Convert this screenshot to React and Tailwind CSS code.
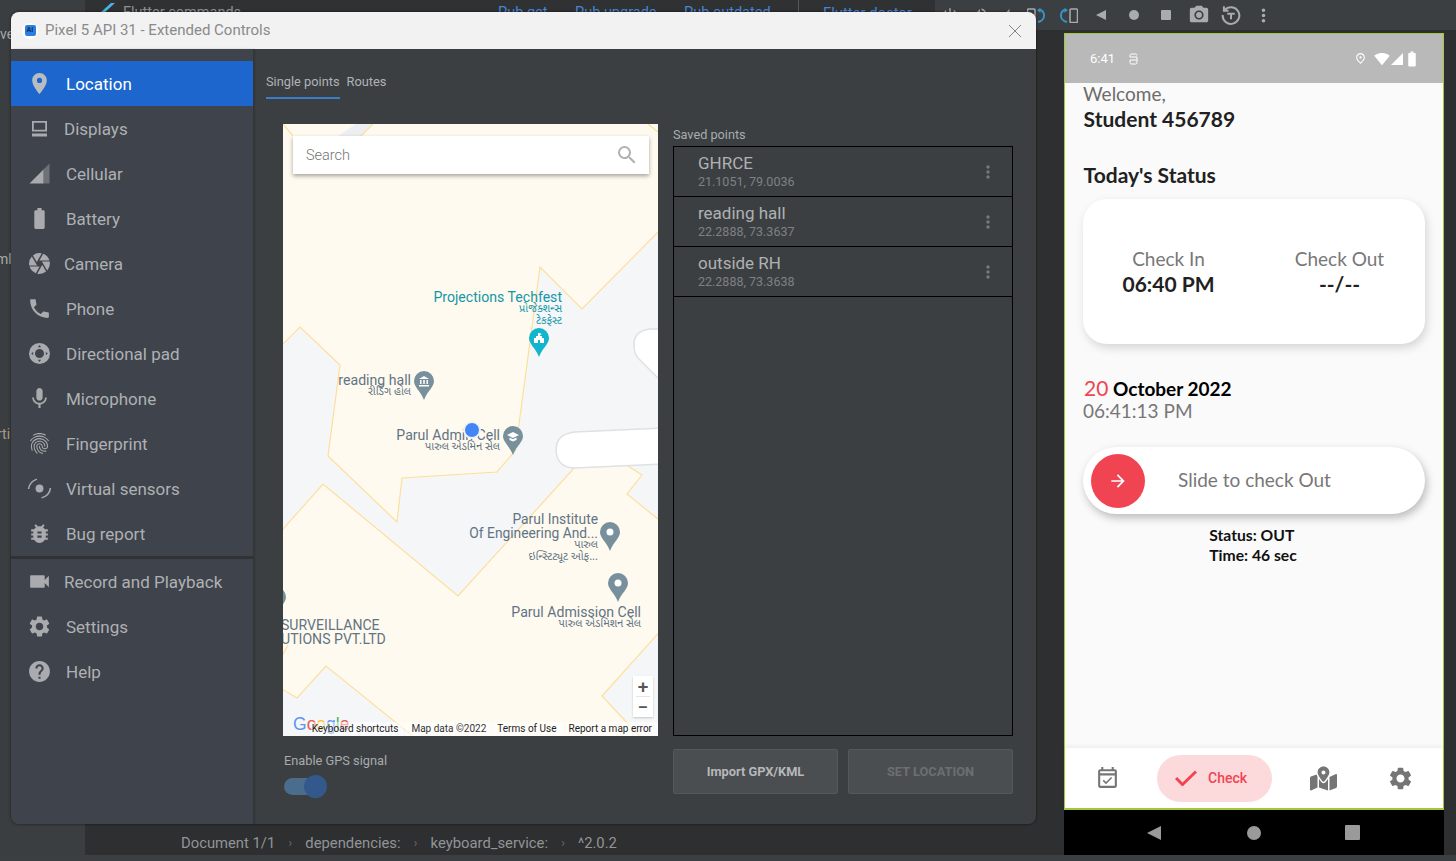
import {
  MdLocationOn,
  MdBatteryFull,
  MdCamera,
  MdPhone,
  MdMic,
  MdFingerprint,
  MdBugReport,
  MdVideocam,
  MdSettings,
  MdHelp,
  MdSearch,
  MdMoreVert,
  MdArrowForward,
  MdOutlineEventAvailable,
  MdPhotoCamera,
  MdPowerSettingsNew,
  MdVolumeUp,
  MdVolumeDown,
  MdOutlinePlace,
  MdSignalWifi4Bar,
} from "react-icons/md";
import { FaMapMarkedAlt } from "react-icons/fa";

const NAV_TOP = [
  { label: "Location", icon: MdLocationOn, active: true },
  { label: "Displays", icon: DisplayIcon, tight: true },
  { label: "Cellular", icon: CellularIcon },
  { label: "Battery", icon: MdBatteryFull },
  { label: "Camera", icon: MdCamera, tight: true },
  { label: "Phone", icon: MdPhone },
  { label: "Directional pad", icon: DpadIcon },
  { label: "Microphone", icon: MdMic },
  { label: "Fingerprint", icon: MdFingerprint },
  { label: "Virtual sensors", icon: SensorsIcon },
  { label: "Bug report", icon: MdBugReport },
];

const NAV_BOTTOM = [
  { label: "Record and Playback", icon: MdVideocam, tight: true },
  { label: "Settings", icon: MdSettings },
  { label: "Help", icon: MdHelp },
];

const SAVED_POINTS = [
  { name: "GHRCE", coords: "21.1051, 79.0036" },
  { name: "reading hall", coords: "22.2888, 73.3637" },
  { name: "outside RH", coords: "22.2888, 73.3638" },
];

function DisplayIcon({ className }) {
  return (
    <svg viewBox="0 0 25 25" className={className}>
      <path
        fill="currentColor"
        fillRule="evenodd"
        d="M5 5h15v10.500H5zM6.800 6.800v7h11.400v-7zM5 17.500h15V20.500H5z"
      />
    </svg>
  );
}

function CellularIcon({ className }) {
  return (
    <svg viewBox="-1.500 -1.500 25 25" className={className}>
      <path d="M1 21 15 7v14z" fill="currentColor" />
      <path d="M15 7l6-6v20h-6z" fill="currentColor" opacity="0.45" />
    </svg>
  );
}

function DpadIcon({ className }) {
  return (
    <svg viewBox="-1.500 -1.500 25 25" className={className}>
      <path
        fillRule="evenodd"
        fill="currentColor"
        d="M11 .5a10.500 10.500 0 1 0 0 21 10.500 10.500 0 0 0 0-21zm0 6a4.500 4.500 0 1 1 0 9 4.500 4.500 0 0 1 0-9zM11 2.600 9.400 4.700h3.200zM11 19.400l1.600-2.100H9.400zM2.600 11l2.100 1.600V9.400zM19.400 11l-2.100-1.600v3.200z"
      />
    </svg>
  );
}

function SensorsIcon({ className }) {
  return (
    <svg viewBox="0 0 24 24" className={className} fill="none" stroke="currentColor">
      <circle cx="12" cy="12" r="3.800" fill="currentColor" stroke="none" />
      <path d="M1.500 12.500C2 8 5 4.500 9.500 3" strokeWidth="1.500" />
      <path d="M22.500 11.500C22 16 19 19.500 14 21" strokeWidth="1.500" />
    </svg>
  );
}

function RotateIcon({ flip, className }) {
  return (
    <svg viewBox="0 0 18 15" className={`${className} ${flip ? "-scale-x-100" : ""}`}>
      <rect x="10" y="1" width="7.500" height="13.500" rx="1" fill="none" stroke="#a9abad" strokeWidth="1.500" />
      <path d="M7 14C2.500 13 .8 9.500 1 7c.2-2.500 2-5 5-5.500" fill="none" stroke="#3592c4" strokeWidth="2" />
      <path d="M4.500 0v5L8 2z" fill="#3592c4" />
    </svg>
  );
}

function ReplayIcon({ className }) {
  return (
    <svg viewBox="0 0 24 24" className={className} fill="none" stroke="currentColor" strokeWidth="2.400">
      <path d="M4.500 6A10 10 0 1 1 2 12" />
      <path d="M3.500 1.500V7H9" />
      <path d="M7.500 10.500h9M12 10.500V17" />
    </svg>
  );
}

function Triangle({ className }) {
  return (
    <svg viewBox="0 0 10 10" className={className}>
      <path d="M0 5 10 0v10z" fill="currentColor" />
    </svg>
  );
}

function MapPin({ color, className, children }) {
  return (
    <svg viewBox="0 0 20 29" className={className}>
      <path
        d="M10 0a10 10 0 0 1 10 10c0 6-6.500 10-10 19C6.500 20 0 16 0 10A10 10 0 0 1 10 0z"
        fill={color}
      />
      {children || <circle cx="10" cy="10" r="3.500" fill="#fff" />}
    </svg>
  );
}

function NavRow({ item }) {
  const Icon = item.icon;
  return (
    <div
      className={`flex h-[45px] items-center pl-[15.500px] ${
        item.active ? "bg-[#1c66cd] text-white" : "text-[#aeb1b4]"
      }`}
    >
      <Icon className={`h-[25px] w-[25px] shrink-0 ${item.active ? "text-[#b9bdc2]" : "text-[#a9abae]"}`} />
      <span className={`pt-[2px] text-[17px] leading-none ${item.tight ? "ml-[12.500px]" : "ml-[14.500px]"}`}>{item.label}</span>
    </div>
  );
}

function Sidebar() {
  return (
    <aside className="flex w-[242px] shrink-0 flex-col bg-[#3f434b] pt-[12px] shadow-[2px_0_2px_rgba(0,0,0,0.15)]">
      {NAV_TOP.map((item) => (
        <NavRow key={item.label} item={item} />
      ))}
      <div className="h-[3px] bg-[#303236]" />
      {NAV_BOTTOM.map((item) => (
        <NavRow key={item.label} item={item} />
      ))}
    </aside>
  );
}

function MapLabel({ className, main, sub, color = "text-[#5f7484]", size = "text-[14.100px]" }) {
  return (
    <div className={`absolute whitespace-nowrap text-right leading-[14px] ${color} ${className}`}>
      {main.map((line) => (
        <div key={line} className={size}>{line}</div>
      ))}
      {sub &&
        sub.map((line) => (
          <div key={line} className="text-[11px] leading-[11.500px] [font-family:'Noto_Sans_Gujarati','Noto_Sans',sans-serif]">{line}</div>
        ))}
    </div>
  );
}

function MapView() {
  return (
    <div className="relative h-[612px] w-[375px] overflow-hidden bg-[#fffaef]">
      <svg viewBox="283 124 375 612" className="absolute inset-0 h-full w-full">
        <g stroke="#fddf9c" strokeWidth="1.200">
          <path
            fill="#f5f6f8"
            d="M664 226 582 309 540 267 519 424 515 451 497 472 402 478 397 522 328 456 340 365 300 327 277 350V536L323 484 458 596 595 445 642 475 627 494 664 524z"
          />
          <path fill="#f5f6f8" d="M664 627 602 696 645 742H664z" />
          <path fill="#f5f6f8" d="M277 686 297 698 326 666 420 742H277z" />
          <path fill="#eceef1" d="M356 124 338 136 361 136 373 124z" stroke="none" />
          <path fill="none" d="M283 124 293 136M373 124 361 136M648 124 658 132M288 645 282 656" />
        </g>
        <path d="M662 329H650Q633 331 634 346 634 355 640 360L662 382z" fill="#fff" stroke="#dfe1e5" strokeWidth="1.500" />
        <path d="M662 428 575 432Q556 434 556 450 557 468 575 468L662 464z" fill="#fff" stroke="#dfe1e5" strokeWidth="1.500" />
      </svg>

      <div className="absolute left-[10px] top-[12px] flex h-[38px] w-[356px] items-center justify-between bg-white pl-[13px] pr-[10px] shadow-[0_2px_4px_rgba(0,0,0,0.35)]">
        <span className="pt-[2px] text-[14.500px] font-light text-[#757575]">Search</span>
        <MdSearch className="h-[24px] w-[24px] text-[#b0b0b0]" />
      </div>

      <MapLabel
        className="right-[96px] top-[166px]"
        main={["Projections Techfest"]}
        sub={["પ્રોજેક્શન્સ", "ટેકફેસ્ટ"]}
        color="text-[#1596a8]"
      />
      <MapPin color="#12b5cb" className="absolute left-[246px] top-[204px] h-[29px] w-[20px]">
        <path d="M5 15v-5h2V8h2V5h1l3 1-2 1v1h2v2h2v5h-4v-3H9v3z" fill="#fff" />
      </MapPin>

      <MapLabel className="right-[247px] top-[249px]" main={["reading hall"]} sub={["રીડિંગ હોલ"]} />
      <MapPin color="#78909c" className="absolute left-[131px] top-[247px] h-[29px] w-[20px]">
        <path d="M10 5l5 3H5zM6 9h1.500v4H6zM9.250 9h1.500v4h-1.500zM12.500 9H14v4h-1.500zM5 14h10v1.500H5z" fill="#fff" />
      </MapPin>

      <MapLabel className="right-[158px] top-[304px]" main={["Parul Admin Cell"]} sub={["પારુલ એડમિન સેલ"]} />
      <MapPin color="#78909c" className="absolute left-[220px] top-[302px] h-[29px] w-[20px]">
        <path d="M10 6l6 3-6 3-6-3zM6.500 11.500 10 13.300l3.500-1.800V14L10 15.500 6.500 14z" fill="#fff" />
      </MapPin>
      <div className="absolute left-[180px] top-[297px] h-[18px] w-[18px] rounded-full border-2 border-[#f1f1f1] bg-[#4285f4]" />

      <MapLabel
        className="right-[60px] top-[388px]"
        main={["Parul Institute", "Of Engineering And..."]}
        sub={["પારુલ", "ઇન્સ્ટિટ્યૂટ ઓફ..."]}
        size="text-[13.800px]"
      />
      <MapPin color="#78909c" className="absolute left-[317px] top-[398px] h-[29px] w-[20px]" />

      <MapPin color="#78909c" className="absolute left-[325px] top-[449px] h-[29px] w-[20px]" />
      <MapLabel className="right-[17px] top-[481px]" main={["Parul Admission Cell"]} sub={["પારુલ એડમિશન સેલ"]} />

      <MapPin color="#78909c" className="absolute left-[-17px] top-[463px] h-[29px] w-[20px]" />
      <div className="absolute -left-[2px] top-[494px] whitespace-nowrap text-[14.100px] leading-[14px] text-[#5f7484]">
        <div>SURVEILLANCE</div>
        <div>UTIONS PVT.LTD</div>
      </div>

      <div className="absolute left-[350px] top-[552px] flex h-[41px] w-[20px] flex-col items-center bg-white text-[#555] shadow-[0_1px_2px_rgba(0,0,0,0.2)]">
        <span className="flex h-[20px] items-center text-[19px] font-medium leading-none">+</span>
        <span className="h-px w-[14px] bg-[#e5e5e5]" />
        <span className="flex h-[20px] items-center text-[19px] font-medium leading-none">−</span>
      </div>

      <div className="absolute bottom-[3px] left-[10px] text-[17.500px] font-medium leading-none opacity-85 [font-family:'Liberation_Sans',sans-serif]">
        <span className="text-[#4285f4]">G</span>
        <span className="text-[#ea4335]">o</span>
        <span className="text-[#fbbc05]">o</span>
        <span className="text-[#4285f4]">g</span>
        <span className="text-[#34a853]">l</span>
        <span className="text-[#ea4335]">e</span>
      </div>
      <div className="absolute bottom-0 right-0 flex h-[14px] items-center gap-[1px] text-[10px] leading-none text-[#222]">
        <span className="flex h-full items-center bg-white/50 pl-[1px] pr-[6px]">Keyboard shortcuts</span>
        <span className="flex h-full items-center bg-white/60 pl-[6px] pr-[5px] text-[#333]">Map data ©2022</span>
        <span className="flex h-full items-center bg-white/60 pl-[5px] pr-[6px]">Terms of Use</span>
        <span className="flex h-full items-center bg-white/60 pl-[5px] pr-[6px]">Report a map error</span>
      </div>
    </div>
  );
}

function SavedRow({ point }) {
  return (
    <div className="flex h-[50px] items-center justify-between border-b border-black pl-[24px] pr-[14px]">
      <div>
        <div className="text-[17px] leading-[19px] text-[#afb1b3]">{point.name}</div>
        <div className="pt-[1px] text-[12.500px] leading-[15px] text-[#7e8184]">{point.coords}</div>
      </div>
      <MdMoreVert className="h-[20px] w-[20px] text-[#77797c]" />
    </div>
  );
}

function ExtendedControls() {
  return (
    <section className="absolute left-[11px] top-[12px] flex h-[812px] w-[1025px] flex-col overflow-hidden rounded-[8px] shadow-[0_0_3px_rgba(0,0,0,0.6)]">
      <header className="flex h-[37px] shrink-0 items-center bg-[#f2f2f2] pl-[11px] pr-[15px]">
        <span className="flex h-[16px] w-[16px] items-center justify-center rounded-full bg-white">
          <span className="flex h-[11px] w-[11px] items-center justify-center rounded-[2px] bg-[#2d7fe0] text-[7px] font-bold leading-none text-[#0c2d5e]">
            AI
          </span>
        </span>
        <span className="ml-[7px] text-[15px] text-[#8a8a8a]">Pixel 5 API 31 - Extended Controls</span>
        <svg viewBox="0 0 12 12" className="ml-auto h-[12px] w-[12px]" fill="none" stroke="#858585" strokeWidth="1">
          <path d="M0 0 12 12M12 0 0 12" />
        </svg>
      </header>
      <div className="flex min-h-0 flex-1 bg-[#3b3f42]">
        <Sidebar />
        <main className="flex-1 pl-[13px]">
          <nav className="flex h-[50px] items-end gap-[7px] text-[12.800px] text-[#b0b3b6]">
            <span className="flex h-[37px] items-center border-b-2 border-[#3b7dc9] pt-[4px]">Single points</span>
            <span className="flex h-[37px] items-center pb-[2px] pt-[4px]">Routes</span>
          </nav>
          <div className="mt-[25px] flex pl-[17px]">
            <div className="w-[375px]">
              <MapView />
              <div className="mt-[17px] pl-[1px] text-[12.800px] leading-[15px] text-[#a8abad]">Enable GPS signal</div>
              <div className="relative mt-[10px] ml-[1px] h-[17px] w-[32px] rounded-full bg-[#4a6d8e]">
                <span className="absolute -right-[11px] -top-[3px] h-[23px] w-[23px] rounded-full bg-[#33598c]" />
              </div>
            </div>
            <div className="ml-[15px] flex w-[340px] flex-col">
              <div className="h-[22px] pt-[3px] text-[12.700px] leading-[15px] text-[#a9acae]">Saved points</div>
              <div className="h-[590px] border border-black">
                {SAVED_POINTS.map((point) => (
                  <SavedRow key={point.name} point={point} />
                ))}
              </div>
              <div className="mt-[13px] flex gap-[10px] text-[12.800px] font-bold">
                <button className="h-[45px] flex-1 rounded-[2px] border border-[#54585b] bg-[#4a4e51] pt-[1px] text-[#b6b8ba]">
                  Import GPX/KML
                </button>
                <button className="h-[45px] flex-1 rounded-[2px] border border-[#54585b] bg-[#4a4e51] pt-[1px] text-[#6c6f72]">
                  SET LOCATION
                </button>
              </div>
            </div>
          </div>
        </main>
      </div>
    </section>
  );
}

function IdeBackdrop() {
  return (
    <>
      <div className="absolute inset-y-0 left-0 w-[85px] overflow-hidden bg-[#3b3e40] text-[14px] text-[#a9a9a9]">
        <span className="absolute left-0 top-[24px]">ve</span>
        <span className="absolute -left-[4px] top-[249px]">ml</span>
        <span className="absolute -left-[3px] top-[424px] text-[#a89a88]">rti</span>
      </div>
      <div className="absolute left-[85px] right-[521px] top-0 h-[30px] bg-[#2f3133] text-[14.500px] text-[#4a86d8]">
        <svg viewBox="0 0 15 10" className="absolute left-[15px] top-[3px] h-[10px] w-[15px]">
          <path d="M0 10 11 0h4L4 10z" fill="#48b5e8" />
        </svg>
        <span className="absolute left-[38px] top-[2px] text-[#8f9193]">Flutter commands</span>
        <span className="absolute left-[413px] top-[2px]">Pub get</span>
        <span className="absolute left-[490px] top-[2px]">Pub upgrade</span>
        <span className="absolute left-[599px] top-[2px]">Pub outdated</span>
        <span className="absolute left-[713px] top-0 h-[12px] w-px bg-[#55585a]" />
        <span className="absolute left-[738px] top-[2px] text-[14.800px]">Flutter doctor</span>
      </div>
      <div className="absolute right-0 top-0 flex h-[30px] w-[521px] items-center bg-[#3c3f41] text-[#a9abad]">
        <MdPowerSettingsNew className="ml-[6px] h-[18px] w-[18px]" />
        <MdVolumeUp className="ml-[12px] h-[18px] w-[18px]" />
        <MdVolumeDown className="ml-[10px] h-[18px] w-[18px]" />
        <RotateIcon flip className="ml-[10px] h-[15px] w-[18px]" />
        <RotateIcon className="ml-[15px] h-[15px] w-[18px]" />
        <Triangle className="ml-[18px] h-[10px] w-[10px]" />
        <span className="ml-[23px] h-[10px] w-[10px] rounded-full bg-[#a9abad]" />
        <span className="ml-[22px] h-[10px] w-[10px] rounded-[1px] bg-[#a9abad]" />
        <MdPhotoCamera className="ml-[17px] h-[22px] w-[22px]" />
        <ReplayIcon className="ml-[11px] h-[20px] w-[20px]" />
        <MdMoreVert className="ml-[12px] h-[21px] w-[21px]" />
      </div>
      <div className="absolute bottom-[6px] left-[85px] right-0 h-[29px] bg-[#2d2f31]" />
      <div className="absolute bottom-0 left-0 right-0 h-[6px] bg-[#3c3f41]" />
      <div className="absolute bottom-[6px] left-[181px] flex h-[24px] items-center text-[14.800px] text-[#929496]">
        <span>Document 1/1</span>
        <span className="w-[30px] text-center text-[12px] text-[#6b6d6f]">›</span>
        <span>dependencies:</span>
        <span className="w-[30px] text-center text-[12px] text-[#6b6d6f]">›</span>
        <span>keyboard_service:</span>
        <span className="w-[30px] text-center text-[12px] text-[#6b6d6f]">›</span>
        <span>^2.0.2</span>
      </div>
    </>
  );
}

function Phone() {
  return (
    <section className="absolute left-[1064px] top-[33px] flex h-[822px] w-[380px] flex-col bg-black">
      <div className="flex h-[777px] flex-col border-x border-t border-b-2 border-[#a3c93a] bg-[#fafafa]">
        <div className="flex h-[49px] shrink-0 items-center bg-[#b9b9b9] pl-[25px] pr-[22px] text-white">
          <span className="pt-[1px] text-[13px] [font-family:Roboto,sans-serif]">6:41</span>
          <svg viewBox="0 0 9 12" className="ml-[14px] h-[12px] w-[9px]" fill="none" stroke="currentColor" strokeWidth="1">
            <path d="M1 4V2.500A1.500 1.500 0 0 1 2.500 1h4A1.500 1.500 0 0 1 8 2.500M1 4h7v5.500A1.500 1.500 0 0 1 6.500 11h-4A1.500 1.500 0 0 1 1 9.500V7h7" />
          </svg>
          <MdOutlinePlace className="ml-auto h-[13px] w-[13px]" />
          <MdSignalWifi4Bar className="ml-[7px] h-[16px] w-[16px]" />
          <svg viewBox="0 0 12 12" className="ml-[1px] h-[12px] w-[12px]">
            <path d="M0 12 12 0v12z" fill="currentColor" />
          </svg>
          <MdBatteryFull className="h-[18px] w-[18px]" />
        </div>

        <div className="flex-1 px-[18px] [font-family:Lato,sans-serif]">
          <div className="text-[19px] leading-[22px] text-[#6b6b6b]">Welcome,</div>
          <div className="mt-[1px] pl-[0.600px] text-[21px] font-bold leading-[26px] text-[#212121]">Student 456789</div>
          <div className="mt-[30px] pl-[0.600px] text-[21px] font-bold leading-[26px] text-[#212121]">Today's Status</div>

          <div className="mt-[11px] flex h-[145px] w-[342px] items-center rounded-[24px] bg-white shadow-[2px_4px_10px_rgba(0,0,0,0.15)]">
            <div className="flex-1 text-center">
              <div className="text-[19px] leading-[24px] text-[#777]">Check In</div>
              <div className="text-[21px] font-bold leading-[26px] text-[#212121]">06:40 PM</div>
            </div>
            <div className="flex-1 text-center">
              <div className="text-[19px] leading-[24px] text-[#777]">Check Out</div>
              <div className="text-[21px] font-bold leading-[26px] text-[#212121]">--/--</div>
            </div>
          </div>

          <div className="mt-[31px] pl-[1px] text-[19px] font-bold leading-[26px] text-black">
            <span className="text-[21px] font-normal text-[#f04452]">20</span> October 2022
          </div>
          <div className="-mt-[1px] text-[19px] leading-[20px] text-[#777]">06:41:13 PM</div>

          <div className="mt-[26px] flex h-[67px] w-[342px] items-center rounded-full bg-white pl-[8px] shadow-[2px_4px_8px_rgba(0,0,0,0.25)]">
            <span className="flex h-[54px] w-[54px] items-center justify-center rounded-full bg-[#f04452] text-white">
              <MdArrowForward className="h-[20px] w-[20px]" />
            </span>
            <span className="ml-[33px] text-[19px] text-[#777]">Slide to check Out</span>
          </div>

          <div className="mx-auto mt-[11px] w-fit -translate-x-[1px] text-[15.700px] font-bold leading-[20px] text-[#111]">
            <div>Status: OUT</div>
            <div>Time: 46 sec</div>
          </div>
        </div>

        <nav className="flex h-[60px] shrink-0 items-center bg-white text-[#757575] shadow-[0_-2px_4px_rgba(0,0,0,0.05)]">
          <MdOutlineEventAvailable className="ml-[30px] h-[25px] w-[25px]" />
          <div className="ml-[37px] flex h-[47px] w-[115px] items-center rounded-full bg-[#fcdadc] pl-[18px] text-[#f04452]">
            <svg viewBox="0 0 22 16" className="h-[16px] w-[22px]" fill="none" stroke="currentColor" strokeWidth="3">
              <path d="M1 8l6.500 6.500L21 1.500" />
            </svg>
            <span className="ml-[11px] text-[14px] font-medium [font-family:Roboto,sans-serif]">Check</span>
          </div>
          <FaMapMarkedAlt className="ml-[38px] h-[25px] w-[27px]" />
          <MdSettings className="ml-[50px] h-[27px] w-[27px]" />
        </nav>
      </div>

      <div className="flex flex-1 items-center text-[#9a9a9a]">
        <Triangle className="ml-[83px] h-[16px] w-[14px]" />
        <span className="ml-[86px] h-[14px] w-[14px] rounded-full bg-[#9a9a9a]" />
        <span className="ml-[84px] h-[15px] w-[15px] rounded-[1px] bg-[#9a9a9a]" />
      </div>
    </section>
  );
}

export default function App() {
  return (
    <div className="relative h-[861px] w-[1456px] overflow-hidden bg-[#2d2f30] [font-family:Roboto,sans-serif]">
      <IdeBackdrop />
      <ExtendedControls />
      <Phone />
    </div>
  );
}
